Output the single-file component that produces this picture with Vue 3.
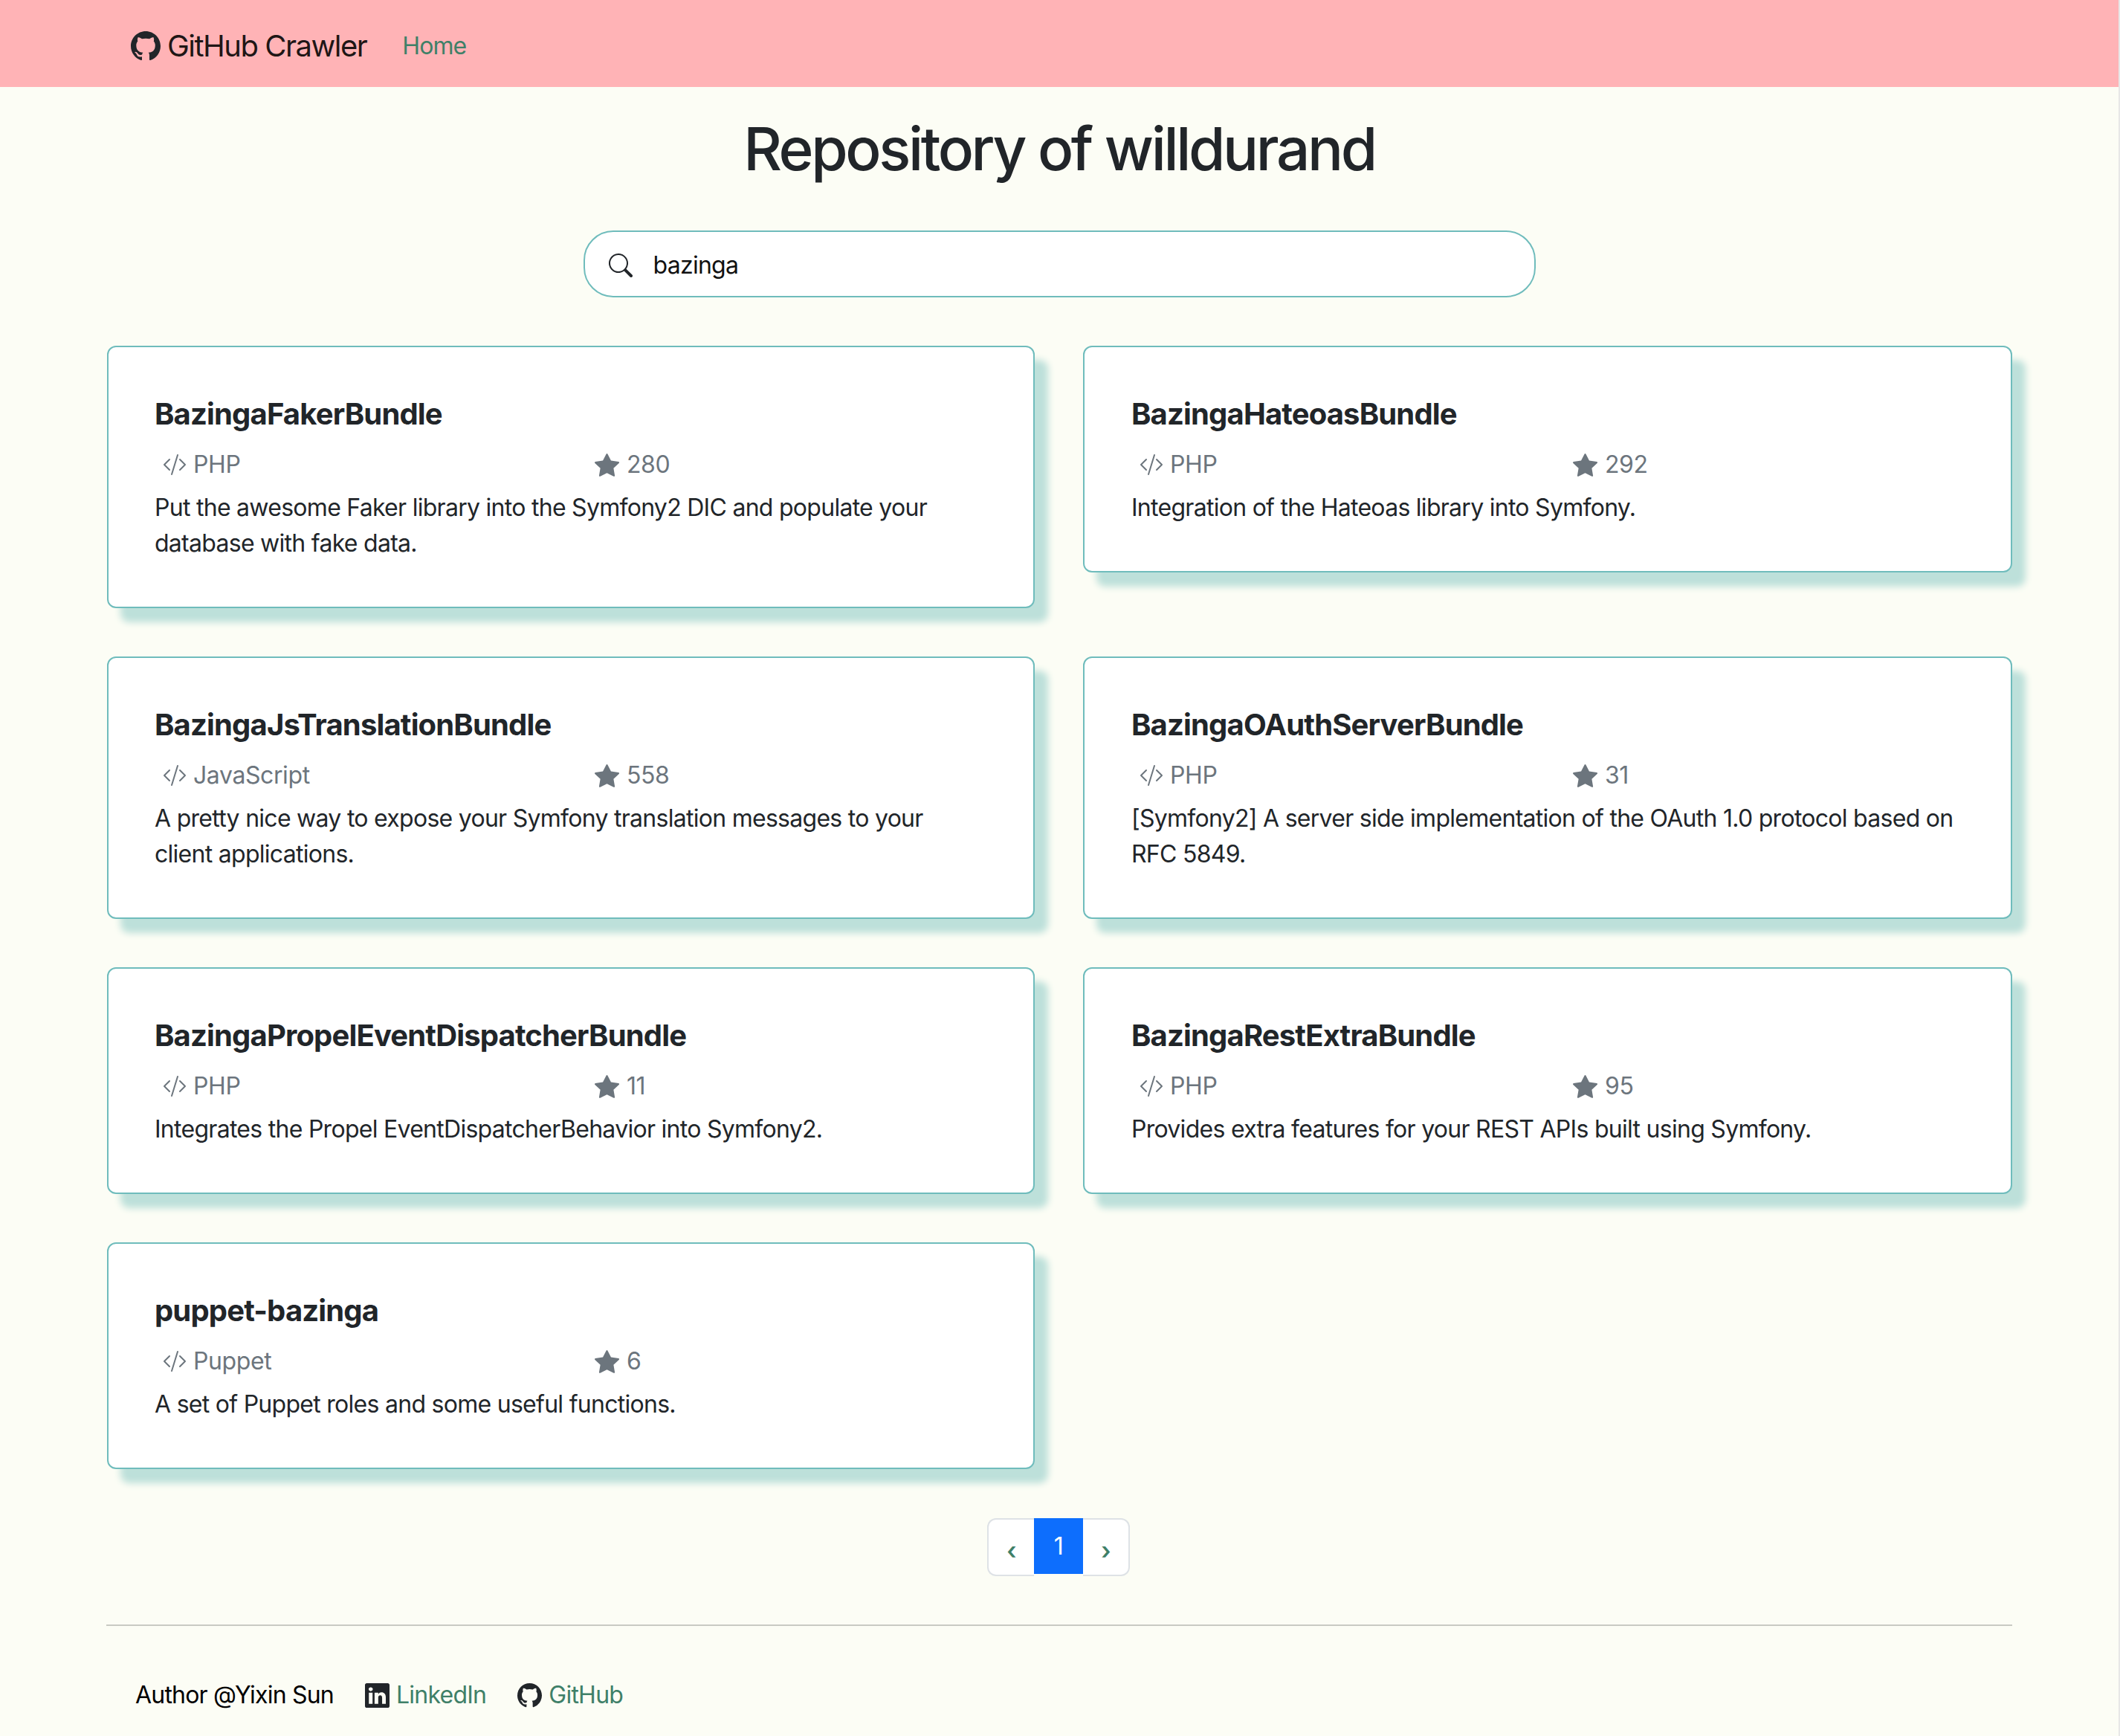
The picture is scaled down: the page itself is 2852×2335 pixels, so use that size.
<template>
    <div class="page">
        <nav class="navbar">
            <a class="brand">
                <svg class="brand-icon" viewBox="0 0 16 16"><path :d="githubPath" /></svg>
                GitHub Crawler
            </a>
            <a class="nav-link">Home</a>
        </nav>

        <main class="content">
            <h1 class="title">Repository of willdurand</h1>

            <div class="search">
                <svg class="search-icon" viewBox="0 0 16 16">
                    <path
                        d="M11.742 10.344a6.5 6.5 0 1 0-1.397 1.398h-.001c.03.04.062.078.098.115l3.85 3.85a1 1 0 0 0 1.415-1.414l-3.85-3.85a1.007 1.007 0 0 0-.115-.1zM12 6.5a5.5 5.5 0 1 1-11 0 5.5 5.5 0 0 1 11 0z"
                    />
                </svg>
                <span class="search-text">bazinga</span>
            </div>

            <div class="repo-grid">
                <div v-for="repo in repos" :key="repo.name" class="repo-card">
                    <h5 class="repo-name">{{ repo.name }}</h5>
                    <div class="repo-meta">
                        <span class="meta-item">
                            <svg class="code-icon" viewBox="0 0 16 16">
                                <path
                                    d="M10.478 1.647a.5.5 0 1 0-.956-.294l-4 13a.5.5 0 0 0 .956.294l4-13zM4.854 4.146a.5.5 0 0 1 0 .708L1.707 8l3.147 3.146a.5.5 0 0 1-.708.708l-3.5-3.5a.5.5 0 0 1 0-.708l3.5-3.5a.5.5 0 0 1 .708 0zm6.292 0a.5.5 0 0 0 0 .708L14.293 8l-3.147 3.146a.5.5 0 0 0 .708.708l3.5-3.5a.5.5 0 0 0 0-.708l-3.5-3.5a.5.5 0 0 0-.708 0z"
                                />
                            </svg>
                            {{ repo.language }}
                        </span>
                        <span class="meta-item">
                            <svg class="star-icon" viewBox="0 0 16 16">
                                <path
                                    d="M3.612 15.443c-.386.198-.824-.149-.746-.592l.83-4.73L.173 6.765c-.329-.314-.158-.888.283-.95l4.898-.696L7.538.792c.197-.39.73-.39.927 0l2.184 4.327 4.898.696c.441.062.612.636.282.95l-3.522 3.356.83 4.73c.078.443-.36.79-.746.592L8 13.187l-4.389 2.256z"
                                />
                            </svg>
                            {{ repo.stars }}
                        </span>
                    </div>
                    <p class="repo-desc">{{ repo.description }}</p>
                </div>
            </div>

            <div class="pagination">
                <a class="page-item page-prev"><span class="chevron">‹</span></a>
                <a class="page-item page-active">1</a>
                <a class="page-item page-next"><span class="chevron">›</span></a>
            </div>

            <hr class="divider" />

            <footer class="footer">
                <span class="author">Author @Yixin Sun</span>
                <a class="footer-link">
                    <svg class="footer-icon" viewBox="0 0 16 16">
                        <path
                            d="M0 1.146C0 .513.526 0 1.175 0h13.65C15.474 0 16 .513 16 1.146v13.708c0 .633-.526 1.146-1.175 1.146H1.175C.526 16 0 15.487 0 14.854V1.146zm4.943 12.248V6.169H2.542v7.225h2.401zm-1.2-8.212c.837 0 1.358-.554 1.358-1.248-.015-.709-.52-1.248-1.342-1.248-.822 0-1.359.54-1.359 1.248 0 .694.521 1.248 1.327 1.248h.016zm4.908 8.212V9.359c0-.216.016-.432.08-.586.173-.431.568-.878 1.232-.878.869 0 1.216.662 1.216 1.634v3.865h2.401V9.25c0-2.22-1.184-3.252-2.764-3.252-1.274 0-1.845.7-2.165 1.193v.025h-.016a5.54 5.54 0 0 1 .016-.025V6.169h-2.4c.03.678 0 7.225 0 7.225h2.4z"
                        />
                    </svg>
                    LinkedIn
                </a>
                <a class="footer-link">
                    <svg class="footer-icon" viewBox="0 0 16 16"><path :d="githubPath" /></svg>
                    GitHub
                </a>
            </footer>
        </main>
    </div>
</template>

<script setup>
const githubPath =
    "M8 0C3.58 0 0 3.58 0 8c0 3.54 2.29 6.53 5.47 7.59.4.07.55-.17.55-.38 0-.19-.01-.82-.01-1.49-2.01.37-2.53-.49-2.69-.94-.09-.23-.48-.94-.82-1.13-.28-.15-.68-.52-.01-.53.63-.01 1.08.58 1.23.82.72 1.21 1.87.87 2.33.66.07-.52.28-.87.51-1.07-1.78-.2-3.64-.89-3.64-3.95 0-.87.31-1.59.82-2.15-.08-.2-.36-1.02.08-2.12 0 0 .67-.21 2.2.82.64-.18 1.32-.27 2-.27.68 0 1.36.09 2 .27 1.53-1.04 2.2-.82 2.2-.82.44 1.1.16 1.92.08 2.12.51.56.82 1.27.82 2.15 0 3.07-1.87 3.75-3.65 3.95.29.25.54.73.54 1.48 0 1.07-.01 1.93-.01 2.2 0 .21.15.46.55.38A8.012 8.012 0 0 0 16 8c0-4.42-3.58-8-8-8z";

const repos = [
    {
        name: "BazingaFakerBundle",
        language: "PHP",
        stars: 280,
        description:
            "Put the awesome Faker library into the Symfony2 DIC and populate your database with fake data.",
    },
    {
        name: "BazingaHateoasBundle",
        language: "PHP",
        stars: 292,
        description: "Integration of the Hateoas library into Symfony.",
    },
    {
        name: "BazingaJsTranslationBundle",
        language: "JavaScript",
        stars: 558,
        description:
            "A pretty nice way to expose your Symfony translation messages to your client applications.",
    },
    {
        name: "BazingaOAuthServerBundle",
        language: "PHP",
        stars: 31,
        description:
            "[Symfony2] A server side implementation of the OAuth 1.0 protocol based on RFC 5849.",
    },
    {
        name: "BazingaPropelEventDispatcherBundle",
        language: "PHP",
        stars: 11,
        description: "Integrates the Propel EventDispatcherBehavior into Symfony2.",
    },
    {
        name: "BazingaRestExtraBundle",
        language: "PHP",
        stars: 95,
        description: "Provides extra features for your REST APIs built using Symfony.",
    },
    {
        name: "puppet-bazinga",
        language: "Puppet",
        stars: 6,
        description: "A set of Puppet roles and some useful functions.",
    },
];
</script>

<style>
html,
body {
    margin: 0;
    background: #e7e7e7;
}
</style>

<style scoped>
.page {
    width: 2850px;
    min-height: 2335px;
    box-sizing: border-box;
    background: #fcfdf5;
    color: #212529;
    font-family: Inter, "Liberation Sans", sans-serif;
    font-size: 32px;
    line-height: 48px;
    letter-spacing: -0.72px;
}

.navbar {
    height: 117px;
    box-sizing: border-box;
    background: #ffb3b6;
    display: flex;
    align-items: center;
    padding: 6px 0 0 176px;
}

.brand {
    display: flex;
    align-items: center;
    gap: 9px;
    font-size: 40px;
    letter-spacing: -1.5px;
    color: rgba(0, 0, 0, 0.9);
    margin-right: 48px;
}

.brand-icon {
    width: 40px;
    height: 40px;
    fill: #212529;
}

.nav-link {
    color: #3f8068;
    letter-spacing: -0.9px;
}

.content {
    padding: 0 143px;
    display: flex;
    flex-direction: column;
}

.title {
    margin: 0;
    height: 193px;
    padding-top: 35px;
    box-sizing: border-box;
    font-size: 80px;
    font-weight: 500;
    line-height: 96px;
    letter-spacing: -3.4px;
    text-align: center;
}

.search {
    align-self: center;
    width: 1281px;
    height: 90px;
    box-sizing: border-box;
    border: 2px solid #6fbcbc;
    border-radius: 40px;
    background: #fff;
    display: flex;
    align-items: center;
    padding: 3px 0 0 32px;
    gap: 28px;
    color: #111;
}

.search-icon {
    width: 32px;
    height: 32px;
    fill: #212529;
}

.repo-grid {
    margin-top: 65px;
    padding-left: 1px;
    display: grid;
    grid-template-columns: 1248px 1250px;
    column-gap: 65px;
    row-gap: 65px;
    align-items: start;
}

.repo-card {
    box-sizing: border-box;
    border: 2px solid #6fbcbc;
    border-radius: 12px;
    background: #fff;
    padding: 66px 66px 61px 62px;
    box-shadow: 18px 19px 10px #bde0da;
}

.repo-card:nth-child(even) {
    padding-left: 63px;
}

.repo-name {
    margin: 0 0 20px;
    font-size: 40px;
    font-weight: 700;
    line-height: 48px;
    letter-spacing: -0.85px;
}

.repo-meta {
    display: grid;
    grid-template-columns: 581px 1fr;
    padding-left: 11px;
    color: #6c757d;
    margin-bottom: 10px;
    letter-spacing: -0.4px;
}

.repo-card:nth-child(even) .repo-meta {
    grid-template-columns: 583px 1fr;
}

.meta-item {
    display: flex;
    align-items: center;
    gap: 10px;
}

.code-icon {
    width: 32px;
    height: 32px;
    fill: #6c757d;
    margin-right: -1px;
}

.star-icon {
    width: 33px;
    height: 33px;
    fill: #6c757d;
}

.repo-desc {
    margin: 0;
}

.pagination {
    align-self: center;
    margin: 66px 2px 0 0;
    display: flex;
    height: 78px;
}

.page-item {
    box-sizing: border-box;
    width: 66px;
    height: 78px;
    display: flex;
    align-items: center;
    justify-content: center;
    background: #fff;
    border: 2px solid #dee2e6;
    color: #3f8068;
}

.page-prev {
    width: 63px;
    border-right: none;
    border-radius: 12px 0 0 12px;
}

.page-next {
    width: 63px;
    border-left: none;
    border-radius: 0 12px 12px 0;
}

.page-active {
    height: 75px;
    border: none;
    background: #0d6efd;
    color: #fff;
}

.chevron {
    position: relative;
    top: 5px;
    font-weight: 600;
}

.divider {
    margin: 65px 0 0;
    border: none;
    border-top: 2px solid #c9cac3;
}

.footer {
    margin-top: 69px;
    padding-left: 39px;
    display: flex;
    align-items: center;
    gap: 42px;
}

.author {
    color: #000;
    letter-spacing: -0.8px;
}

.footer-link {
    display: flex;
    align-items: center;
    gap: 9px;
    color: #3f8068;
    letter-spacing: -0.75px;
}

.footer-icon {
    width: 33px;
    height: 33px;
    fill: #212529;
}
</style>
